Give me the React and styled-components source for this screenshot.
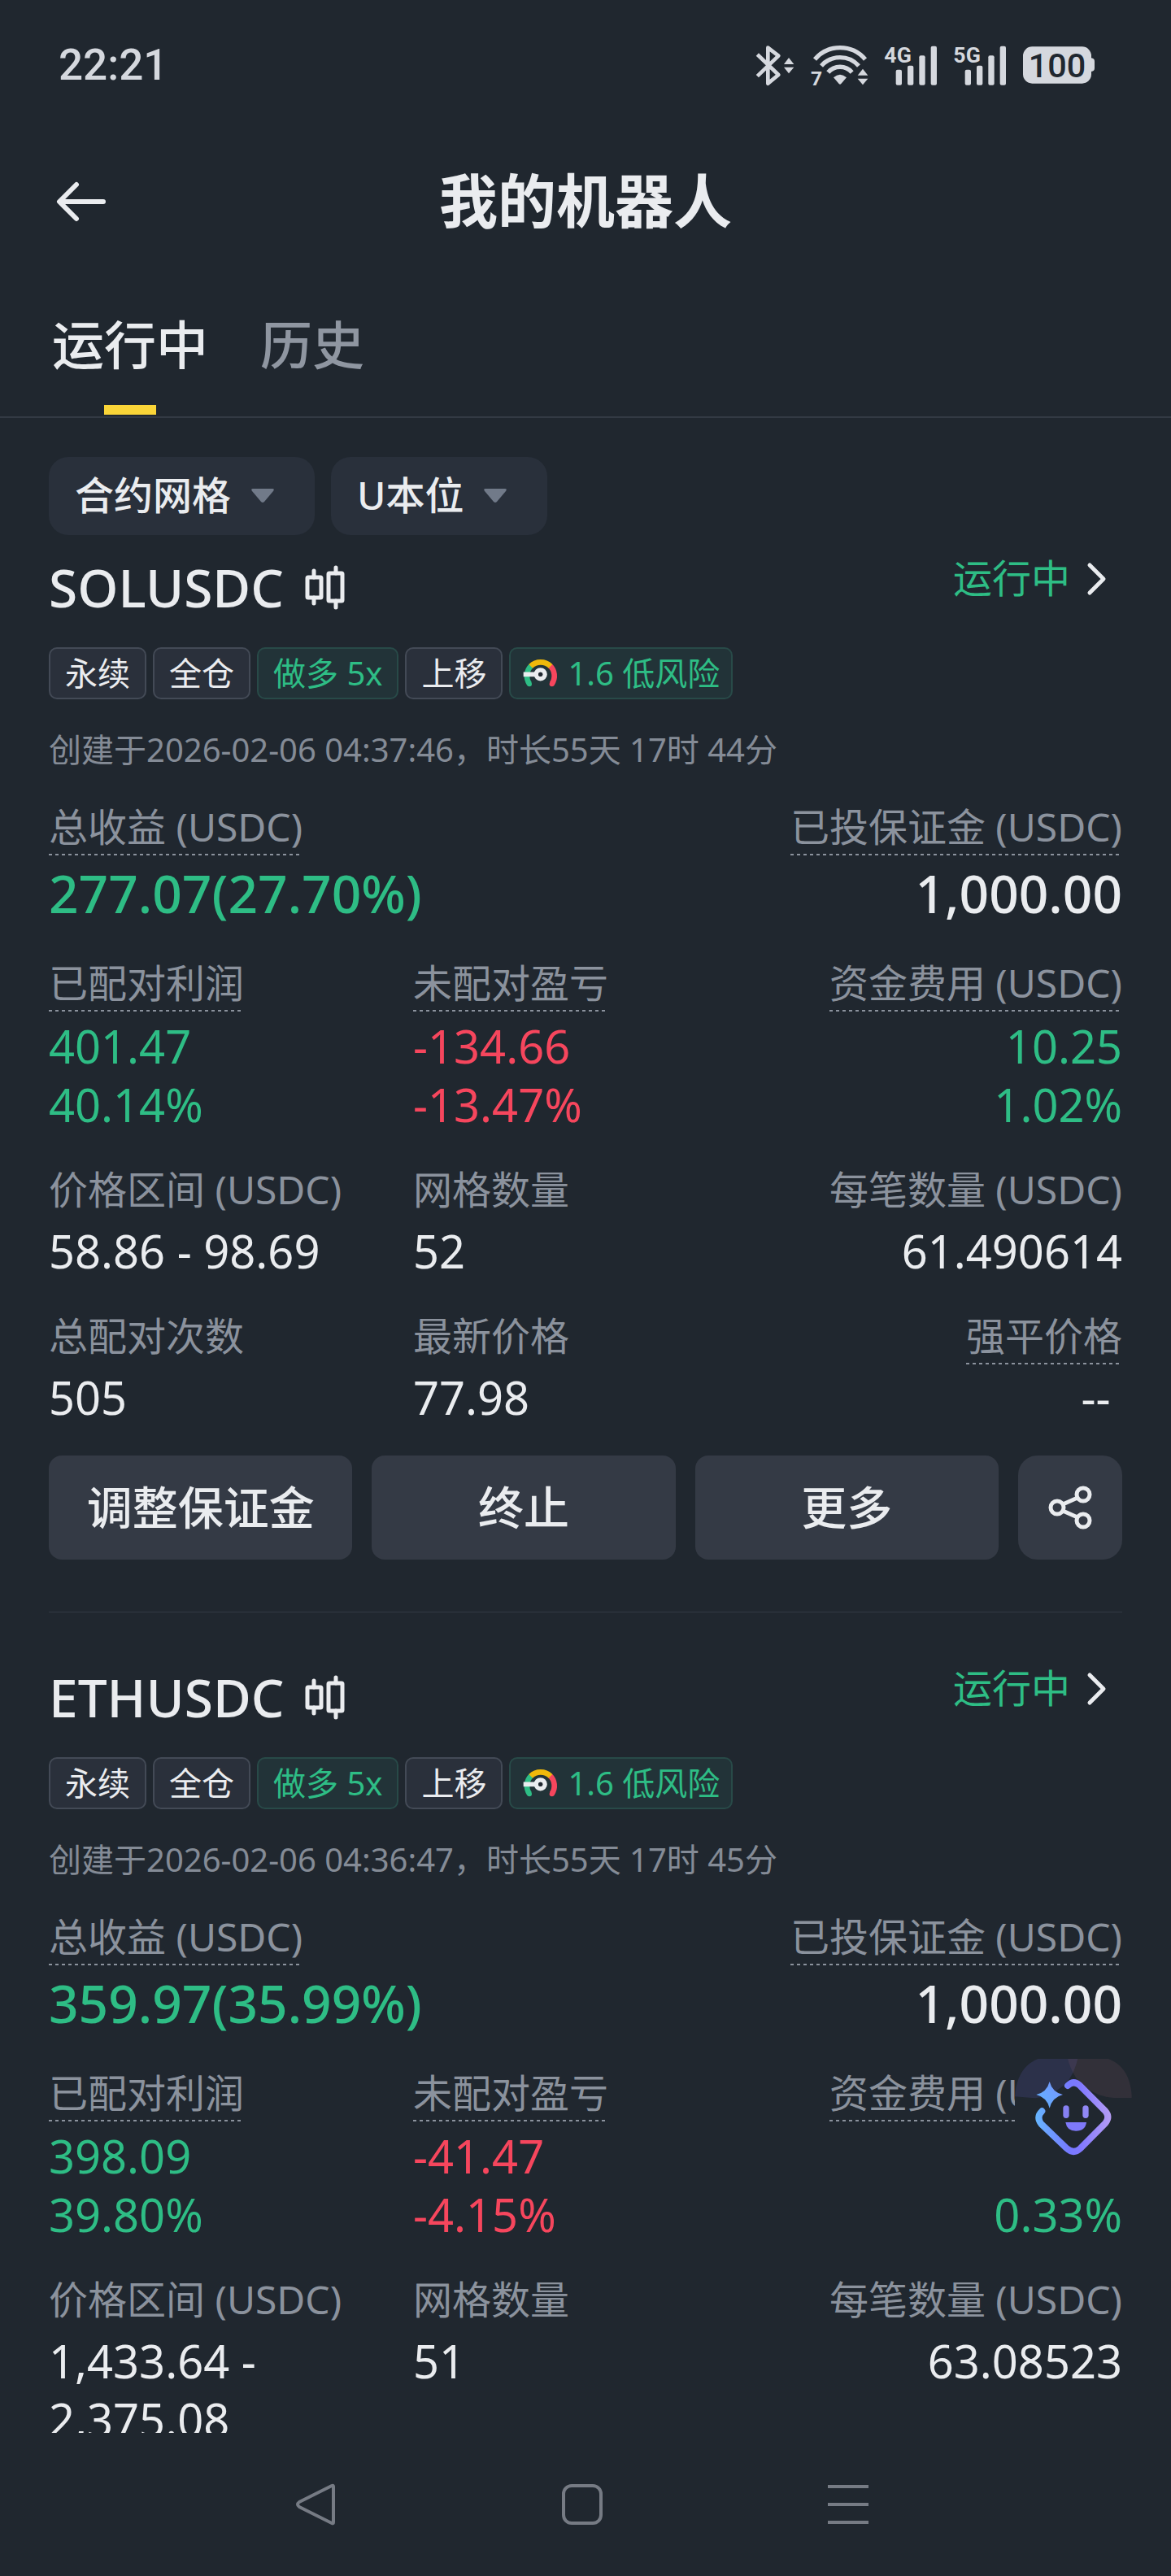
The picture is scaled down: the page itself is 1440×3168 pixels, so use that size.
import React, { useState } from 'react'
import styled, { createGlobalStyle } from 'styled-components'


const GlobalStyle = createGlobalStyle`
  * {
    box-sizing: border-box;
  }
  body {
    margin: 0;
    background: #20272f;
    color: #eaecef;
    font-family: "Noto Sans", "Noto Sans CJK SC", sans-serif;
  }
  button, select {
    margin: 0;
    padding: 0;
    border: none;
    background: none;
    color: inherit;
    font-family: inherit;
    cursor: pointer;
  }
  svg {
    display: block;
    flex-shrink: 0;
    overflow: visible;
  }
`

const Page = styled.div`
  height: 100vh;
  display: flex;
  flex-direction: column;
  overflow: hidden;
`

const StatusBar = styled.div`
  height: 160px;
  flex-shrink: 0;
  padding: 0 94px 0 72px;
  display: flex;
  align-items: center;
  justify-content: space-between;
  color: #d5d8de;
  font-family: Roboto, sans-serif;
`
const Time = styled.div`
  font-size: 53px;
  font-weight: 500;
`
const StatusIcons = styled.div`
  display: flex;
  align-items: center;
  gap: 20px;
`

const Header = styled.header`
  height: 176px;
  flex-shrink: 0;
  padding: 0 64px 4px;
  display: grid;
  grid-template-columns: 72px 1fr 72px;
  align-items: center;
`
const Title = styled.h1`
  margin: 0;
  font-size: 72px;
  line-height: 96px;
  font-weight: 600;
  text-align: center;
`

const Tabs = styled.nav`
  flex-shrink: 0;
  padding: 0 64px;
  display: flex;
  gap: 64px;
  border-bottom: 2px solid #333a44;
`
const Tab = styled.button`
  position: relative;
  height: 176px;
  padding-bottom: 8px;
  font-size: 64px;
  font-weight: 500;
  color: ${props => props.$active ? '#eaecef' : '#8f96a1'};

  &::after {
    content: '';
    position: absolute;
    left: 50%;
    bottom: 2px;
    width: 64px;
    height: 12px;
    margin-left: -32px;
    background: ${props => props.$active ? '#fad538' : 'transparent'};
  }
`

const ListArea = styled.main`
  position: relative;
  flex: 1;
  min-height: 0;
  overflow: hidden;
  padding: 48px 60px 0;
`

const Filters = styled.div`
  display: flex;
  gap: 20px;
  margin-bottom: 24px;
`
const Filter = styled.label`
  position: relative;
  display: flex;
  align-items: center;

  svg {
    position: absolute;
    right: 50px;
    pointer-events: none;
  }
`
const FilterSelect = styled.select`
  appearance: none;
  height: 96px;
  padding: 0 102px 4px 32px;
  border-radius: 24px;
  background: #29303b;
  font-size: 48px;
  font-weight: 500;
`

const Card = styled.section`
  & + & {
    margin-top: 64px;
    padding-top: 64px;
    border-top: 1px solid #323943;
  }
`
const CardHead = styled.div`
  display: flex;
  align-items: flex-start;
  justify-content: space-between;
`
const Pair = styled.h2`
  margin: 0;
  display: flex;
  align-items: center;
  gap: 24px;
  font-size: 64px;
  line-height: 82px;
  font-weight: 500;
`
const RunState = styled.a`
  display: flex;
  align-items: center;
  gap: 20px;
  padding-right: 20px;
  font-size: 48px;
  line-height: 58px;
  color: #2ebd85;
  text-decoration: none;
`

const Tags = styled.div`
  display: flex;
  gap: 8px;
  margin-top: 32px;
`
const Tag = styled.span`
  height: 64px;
  padding: 0 ${props => props.$risk ? '14px' : '18px'};
  display: flex;
  align-items: center;
  gap: 12px;
  border: 2px solid ${props => props.$green ? '#284a48' : '#434a56'};
  border-radius: 10px;
  background: ${props => props.$green ? '#223338' : '#2a303b'};
  color: ${props => props.$green ? '#2ebd85' : '#eaecef'};
  font-size: 40px;
  line-height: 60px;
`
const Created = styled.p`
  margin: 32px 0;
  font-size: 40px;
  line-height: 60px;
  color: #848b96;
`

const Row = styled.div`
  display: grid;
  grid-template-columns: repeat(${props => props.$cols || 3}, 1fr);
  column-gap: 24px;
  margin-bottom: 36px;
`
const Stat = styled.div`
  display: flex;
  flex-direction: column;
  align-items: flex-start;
  gap: ${props => props.$gap || 4}px;

  &:last-child {
    align-items: flex-end;
    text-align: right;
  }
`
const Label = styled.span`
  padding-bottom: 2px;
  font-size: 48px;
  line-height: 66px;
  color: #8b929d;
  white-space: nowrap;
  background: ${props => props.$hint
    ? 'repeating-linear-gradient(90deg, #8b929d 0 4px, transparent 4px 8px) bottom / 100% 2px no-repeat'
    : 'none'};
`
const tones = { up: '#2ebd85', down: '#f6465d', plain: '#eaecef' }
const Value = styled.div`
  font-size: ${props => props.$big ? '64px' : '56px'};
  line-height: ${props => props.$big ? '82px' : '72px'};
  min-height: 72px;
  font-weight: ${props => props.$big ? 500 : 400};
  color: ${props => tones[props.$tone || 'plain']};
`

const Actions = styled.div`
  display: flex;
  gap: 24px;
`
const Action = styled.button`
  flex: 1;
  height: 128px;
  padding-bottom: 8px;
  border-radius: 16px;
  background: #343a45;
  font-size: 56px;
  font-weight: 500;
`
const ShareButton = styled(Action)`
  flex: 0 0 128px;
  padding-bottom: 0;
  display: flex;
  align-items: center;
  justify-content: center;
  border-radius: 24px;
`

const BotButton = styled.button`
  position: absolute;
  right: 48px;
  bottom: 316px;
  width: 144px;
  height: 144px;
  background: #20272f;
`

const NavBar = styled.nav`
  height: 176px;
  flex-shrink: 0;
  padding-right: 8px;
  display: flex;
  align-items: center;
  justify-content: center;
  gap: 275px;
`
const NavButton = styled.button`
  width: 52px;
  height: 52px;
`


const Bluetooth = () => (
  <svg width="48" height="52" viewBox="147 70 144 156" fill="none">
    <path d="M154 109 L232 184 L193 216 V84 L232 114 L154 189" stroke="currentColor" strokeWidth="14" strokeLinejoin="round" />
    <path d="M252 145 L270 121 L289 145Z M252 156 L270 179 L289 156Z" fill="currentColor" />
  </svg>
)

const Wifi = () => (
  <svg width="71" height="52" viewBox="354 70 213 156" fill="none">
    <g stroke="currentColor" strokeWidth="16">
      <path d="M369 127 A122 122 0 0 1 555 127" />
      <path d="M393 151 A92 92 0 0 1 531 151" />
      <path d="M418 175 A58 58 0 0 1 506 175" />
    </g>
    <path d="M438 194 Q462 172 486 194 L466 217 Q462 221 458 217Z" fill="currentColor" />
    <path d="M527 186 L546 162 L565 186Z M527 198 L546 221 L565 198Z" fill="currentColor" />
    <text x="354" y="222" fontSize="74" fontWeight="700" fill="currentColor">7</text>
  </svg>
)

const Signal = ({ kind }) => (
  <svg width="65" height="52" viewBox="620 70 195 156" fill="currentColor">
    <text x="618" y="138" fontSize="80" fontWeight="700">{kind}</text>
    <rect x="661" y="165" width="22" height="57" rx="6" />
    <rect x="704" y="150" width="22" height="72" rx="6" />
    <rect x="747" y="113" width="22" height="109" rx="6" />
    <rect x="790" y="78" width="22" height="144" rx="6" />
  </svg>
)

const Battery = () => (
  <svg width="88" height="46" viewBox="1134 85 264 138">
    <rect x="1134" y="86" width="252" height="136" rx="34" fill="currentColor" />
    <path d="M1386 128 Q1398 130 1398 140 V166 Q1398 176 1386 178Z" fill="currentColor" />
    <text x="1260" y="199" fontSize="124" fontWeight="500" textAnchor="middle" fill="#20272f">100</text>
  </svg>
)

const BackArrow = () => (
  <svg width="72" height="56" viewBox="0 0 72 56" fill="none" stroke="currentColor" strokeWidth="6" strokeLinecap="round" strokeLinejoin="round">
    <path d="M63 30 H10 M30 9 L9 30 L30 51" />
  </svg>
)

const Caret = () => (
  <svg width="28" height="18" viewBox="0 0 28 18">
    <path d="M2 0 H26 Q29 0 27 3 L16 16 Q14 18 12 16 L1 3 Q-1 0 2 0Z" fill="#717a89" />
  </svg>
)

const Candles = () => (
  <svg width="52" height="56" viewBox="0 0 52 56" fill="none" stroke="currentColor" strokeWidth="5" strokeLinecap="round">
    <rect x="5" y="15" width="17" height="25" rx="1" />
    <path d="M13 7 V15 M13 40 V47" />
    <rect x="31" y="10" width="17" height="34" rx="1" />
    <path d="M40 3 V10 M40 44 V52" />
  </svg>
)

const Chevron = () => (
  <svg width="24" height="40" viewBox="0 0 24 40" fill="none" stroke="#eaecef" strokeWidth="5" strokeLinecap="round" strokeLinejoin="round">
    <path d="M4 4 L21 21 L4 38" />
  </svg>
)

const Gauge = () => (
  <svg width="44" height="36" viewBox="0 0 132 108" fill="none" strokeWidth="20">
    <path d="M27 93 A52 52 0 0 1 34 26" stroke="#2ebd85" />
    <circle cx="27" cy="94" r="9" fill="#2ebd85" />
    <path d="M103 26 A52 52 0 0 1 110 93" stroke="#f6465d" />
    <circle cx="110" cy="94" r="9" fill="#f6465d" />
    <path d="M32 28 A52 52 0 0 1 105 28" stroke="#f0b90b" />
    <path d="M5 58 H60" stroke="#eaecef" strokeWidth="17" />
    <circle cx="68" cy="58" r="16" stroke="#eaecef" strokeWidth="17" />
    <circle cx="68" cy="58" r="8" fill="#20272f" />
  </svg>
)

const Share = () => (
  <svg width="56" height="56" viewBox="0 0 56 56" fill="none" stroke="currentColor" strokeWidth="5">
    <circle cx="12" cy="28" r="8" />
    <circle cx="44" cy="12" r="8" />
    <circle cx="44" cy="44" r="8" />
    <path d="M19 24 L37 16 M19 32 L37 40" />
  </svg>
)

const Bot = () => (
  <svg width="144" height="144" viewBox="0 0 432 432" fill="none">
    <defs>
      <linearGradient id="frame" x1="77" y1="216" x2="352" y2="216" gradientUnits="userSpaceOnUse">
        <stop offset="0" stopColor="#66b6ff" />
        <stop offset="0.45" stopColor="#7679ff" />
        <stop offset="0.6" stopColor="#8078ff" />
        <stop offset="1" stopColor="#b59cf5" />
      </linearGradient>
      <linearGradient id="spark" x1="80" y1="180" x2="176" y2="100" gradientUnits="userSpaceOnUse">
        <stop offset="0" stopColor="#5fb4ff" />
        <stop offset="1" stopColor="#7795ff" />
      </linearGradient>
    </defs>
    <path d="M85 0 H232 Q212 80 170 106 Q130 138 76 145 L0 139 Q8 30 85 0Z" fill="#50509a" fillOpacity="0.25" />
    <path d="M195 0 H345 Q424 30 431 135 V144 H366 Q300 140 255 100 Q214 70 195 0Z" fill="#7e5366" fillOpacity="0.2" />
    <path d="M195 99 Q216 78 237 96 L334 193 Q352 214 334 237 L241 331 Q217 353 192 331 L97 240 Q78 214 100 193" stroke="url(#frame)" strokeWidth="24" strokeLinecap="round" />
    <path d="M128 84 Q138 123 177 132 Q138 142 128 182 Q118 142 79 132 Q118 123 128 84Z" fill="url(#spark)" />
    <rect x="178" y="172" width="22" height="47" rx="11" fill="#8680f2" />
    <rect x="250" y="172" width="22" height="47" rx="11" fill="#9188f5" />
    <path d="M187 234 H264 Q260 266 225 266 Q192 266 187 234Z" fill="#7f79fa" />
  </svg>
)


const bots = [
  {
    pair: 'SOLUSDC',
    created: '创建于2026-02-06 04:37:46，时长55天 17时 44分',
    profit: '277.07(27.70%)',
    margin: '1,000.00',
    matched: ['401.47', '40.14%'],
    unmatched: ['-134.66', '-13.47%'],
    funding: ['10.25', '1.02%'],
    range: '58.86 - 98.69',
    grids: '52',
    perOrder: '61.490614',
    rounds: '505',
    lastPrice: '77.98',
  },
  {
    pair: 'ETHUSDC',
    created: '创建于2026-02-06 04:36:47，时长55天 17时 45分',
    profit: '359.97(35.99%)',
    margin: '1,000.00',
    matched: ['398.09', '39.80%'],
    unmatched: ['-41.47', '-4.15%'],
    funding: ['', '0.33%'],
    range: '1,433.64 - 2,375.08',
    grids: '51',
    perOrder: '63.08523',
  },
]

const StatItem = ({ label, values, hint, tone, big, gap }) => (
  <Stat $gap={gap}>
    <Label $hint={hint}>{label}</Label>
    <div>
      {values.map((value, i) => <Value key={i} $tone={tone} $big={big}>{value}</Value>)}
    </div>
  </Stat>
)

const BotCard = ({ bot }) => (
  <Card>
    <CardHead>
      <Pair>{bot.pair}<Candles /></Pair>
      <RunState href="#">运行中<Chevron /></RunState>
    </CardHead>

    <Tags>
      <Tag>永续</Tag>
      <Tag>全仓</Tag>
      <Tag $green>做多 5x</Tag>
      <Tag>上移</Tag>
      <Tag $green $risk><Gauge />1.6 低风险</Tag>
    </Tags>
    <Created>{bot.created}</Created>

    <Row $cols={2}>
      <StatItem label="总收益 (USDC)" values={[bot.profit]} hint tone="up" big gap={6} />
      <StatItem label="已投保证金 (USDC)" values={[bot.margin]} hint big gap={6} />
    </Row>
    <Row>
      <StatItem label="已配对利润" values={bot.matched} hint tone="up" gap={6} />
      <StatItem label="未配对盈亏" values={bot.unmatched} hint tone="down" gap={6} />
      <StatItem label="资金费用 (USDC)" values={bot.funding} hint tone="up" gap={6} />
    </Row>
    <Row>
      <StatItem label="价格区间 (USDC)" values={[bot.range]} />
      <StatItem label="网格数量" values={[bot.grids]} />
      <StatItem label="每笔数量 (USDC)" values={[bot.perOrder]} />
    </Row>

    {bot.rounds && (
      <>
        <Row>
          <StatItem label="总配对次数" values={[bot.rounds]} />
          <StatItem label="最新价格" values={[bot.lastPrice]} />
          <StatItem label="强平价格" values={['--\u00a0']} hint />
        </Row>
        <Actions>
          <Action>调整保证金</Action>
          <Action>终止</Action>
          <Action>更多</Action>
          <ShareButton aria-label="分享"><Share /></ShareButton>
        </Actions>
      </>
    )}
  </Card>
)

export default function App() {
  const [tab, setTab] = useState('运行中')

  return (
    <Page>
      <GlobalStyle />
      <StatusBar>
        <Time>22:21</Time>
        <StatusIcons>
          <Bluetooth />
          <Wifi />
          <Signal kind="4G" />
          <Signal kind="5G" />
          <Battery />
        </StatusIcons>
      </StatusBar>

      <Header>
        <button aria-label="返回"><BackArrow /></button>
        <Title>我的机器人</Title>
      </Header>

      <Tabs>
        {['运行中', '历史'].map(name => (
          <Tab key={name} $active={tab === name} onClick={() => setTab(name)}>{name}</Tab>
        ))}
      </Tabs>

      <ListArea>
        <Filters>
          <Filter>
            <FilterSelect aria-label="类型"><option>合约网格</option></FilterSelect>
            <Caret />
          </Filter>
          <Filter>
            <FilterSelect aria-label="本位"><option>U本位</option></FilterSelect>
            <Caret />
          </Filter>
        </Filters>

        {bots.map(bot => <BotCard key={bot.pair} bot={bot} />)}

        <BotButton aria-label="助手"><Bot /></BotButton>
      </ListArea>

      <NavBar>
        <NavButton aria-label="后退">
          <svg width="52" height="52" viewBox="0 0 52 52" fill="none" stroke="#767b84" strokeWidth="4" strokeLinejoin="round">
            <path d="M47 4 V48 Q47 50 45 49 L5 29 Q1 26 5 23 L45 3 Q47 2 47 4Z" />
          </svg>
        </NavButton>
        <NavButton aria-label="主页">
          <svg width="52" height="52" viewBox="0 0 52 52" fill="none" stroke="#767b84" strokeWidth="4">
            <rect x="3" y="3" width="46" height="46" rx="10" />
          </svg>
        </NavButton>
        <NavButton aria-label="最近任务">
          <svg width="52" height="52" viewBox="0 0 52 52" stroke="#767b84" strokeWidth="4">
            <path d="M1 4 H51 M1 26 H51 M1 48 H51" />
          </svg>
        </NavButton>
      </NavBar>
    </Page>
  )
}
